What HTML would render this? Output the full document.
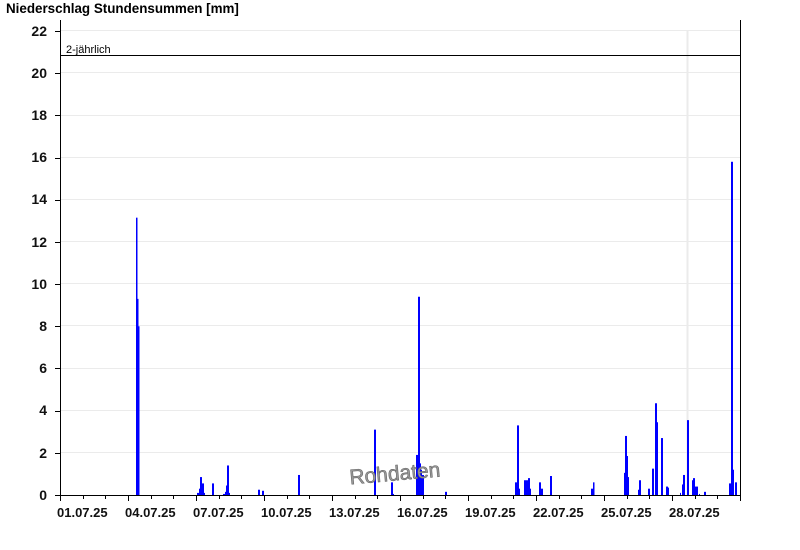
<!DOCTYPE html>
<html><head><meta charset="utf-8"><style>
html,body{margin:0;padding:0;background:#fff;width:800px;height:550px;overflow:hidden}
svg{display:block}
text{font-family:"Liberation Sans",Arial,sans-serif}
</style></head><body>
<svg width="800" height="550" viewBox="0 0 800 550" xmlns="http://www.w3.org/2000/svg">
<text x="6" y="13" font-size="13.4" font-weight="bold" fill="#000">Niederschlag Stundensummen [mm]</text>
<g stroke="#ebebeb" stroke-width="1">
<line x1="61" x2="740" y1="452.5" y2="452.5"/><line x1="61" x2="740" y1="410.5" y2="410.5"/>
<line x1="61" x2="740" y1="368.5" y2="368.5"/><line x1="61" x2="740" y1="325.5" y2="325.5"/>
<line x1="61" x2="740" y1="283.5" y2="283.5"/><line x1="61" x2="740" y1="241.5" y2="241.5"/>
<line x1="61" x2="740" y1="199.5" y2="199.5"/><line x1="61" x2="740" y1="157.5" y2="157.5"/>
<line x1="61" x2="740" y1="115.5" y2="115.5"/><line x1="61" x2="740" y1="72.5" y2="72.5"/>
<line x1="61" x2="740" y1="30.5" y2="30.5"/>
<line x1="687.5" x2="687.5" y1="30" y2="495" stroke-width="2"/>
</g>
<line x1="61" x2="740" y1="55.5" y2="55.5" stroke="#000"/>
<text x="66" y="53" font-size="11" fill="#000">2-jährlich</text>
<g fill="#0000ff" transform="translate(0,495) scale(1,-21.09)">
<rect x="136" y="0" width="1.5" height="13.15"/><rect x="137" y="0" width="1.5" height="9.3"/><rect x="138" y="0" width="1.5" height="8.0"/>
<rect x="197" y="0" width="2" height="0.1"/><rect x="199" y="0" width="1" height="0.3"/><rect x="200" y="0" width="2" height="0.85"/>
<rect x="202" y="0" width="2" height="0.55"/><rect x="204" y="0" width="1" height="0.1"/><rect x="212" y="0" width="2" height="0.55"/>
<rect x="223" y="0" width="2" height="0.05"/><rect x="225" y="0" width="1" height="0.15"/><rect x="226" y="0" width="1" height="0.45"/>
<rect x="227" y="0" width="2" height="1.4"/><rect x="229" y="0" width="1" height="0.1"/>
<rect x="258" y="0" width="2" height="0.25"/><rect x="262" y="0" width="2" height="0.2"/><rect x="298" y="0" width="2" height="0.95"/>
<rect x="374" y="0" width="2" height="3.1"/><rect x="391" y="0" width="2" height="0.6"/><rect x="393" y="0" width="1" height="0.05"/>
<rect x="416" y="0" width="2" height="1.9"/><rect x="418" y="0" width="2" height="9.4"/><rect x="419" y="0" width="2" height="1.5"/>
<rect x="420" y="0" width="2" height="1.2"/><rect x="422" y="0" width="2" height="0.95"/><rect x="445" y="0" width="2" height="0.15"/>
<rect x="515" y="0" width="2" height="0.6"/><rect x="517" y="0" width="2" height="3.3"/><rect x="519" y="0" width="1" height="0.3"/>
<rect x="524" y="0" width="2" height="0.7"/><rect x="526" y="0" width="2" height="0.7"/><rect x="528" y="0" width="2" height="0.8"/>
<rect x="530" y="0" width="1" height="0.3"/><rect x="539" y="0" width="2" height="0.6"/><rect x="541" y="0" width="2" height="0.3"/>
<rect x="550" y="0" width="2" height="0.9"/><rect x="591" y="0" width="2" height="0.3"/><rect x="593" y="0" width="1.5" height="0.6"/>
<rect x="624" y="0" width="1" height="1.05"/><rect x="625" y="0" width="2" height="2.8"/><rect x="627" y="0" width="1" height="1.85"/>
<rect x="628" y="0" width="1" height="0.85"/><rect x="638" y="0" width="1" height="0.25"/><rect x="639" y="0" width="2" height="0.7"/>
<rect x="648" y="0" width="2" height="0.3"/><rect x="652" y="0" width="2" height="1.25"/><rect x="655" y="0" width="2" height="4.35"/>
<rect x="657" y="0" width="1" height="3.45"/><rect x="661" y="0" width="2" height="2.7"/><rect x="666" y="0" width="2" height="0.4"/>
<rect x="668" y="0" width="1" height="0.35"/><rect x="680" y="0" width="1" height="0.1"/><rect x="682" y="0" width="1" height="0.5"/>
<rect x="683" y="0" width="2" height="0.95"/><rect x="687" y="0" width="2" height="3.55"/><rect x="692" y="0" width="1" height="0.7"/>
<rect x="693" y="0" width="2" height="0.8"/><rect x="695" y="0" width="2" height="0.4"/><rect x="697" y="0" width="1" height="0.4"/>
<rect x="699" y="0" width="1" height="0.05"/><rect x="704" y="0" width="2" height="0.15"/>
<rect x="729" y="0" width="2" height="0.55"/><rect x="731" y="0" width="2" height="15.8"/><rect x="733" y="0" width="1" height="1.2"/>
<rect x="735" y="0" width="2" height="0.6"/>
</g>
<line x1="60.5" x2="60.5" y1="20" y2="500" stroke="#000"/>
<line x1="740.5" x2="740.5" y1="20" y2="500" stroke="#000"/>
<line x1="55" x2="741" y1="495.5" y2="495.5" stroke="#000"/>
<path stroke="#000" fill="none" d="M60.5 495v6M83.5 495v4M105.5 495v4M128.5 495v6M151.5 495v4M173.5 495v4M196.5 495v6M219.5 495v4M241.5 495v4M264.5 495v6M287.5 495v4M309.5 495v4M332.5 495v6M355.5 495v4M377.5 495v4M400.5 495v6M423.5 495v4M445.5 495v4M468.5 495v6M491.5 495v4M513.5 495v4M536.5 495v6M559.5 495v4M581.5 495v4M604.5 495v6M627.5 495v4M649.5 495v4M672.5 495v6M695.5 495v4M717.5 495v4M740.5 495v6
M55 495.5h5M55 453.5h5M55 411.5h5M55 368.5h5M55 326.5h5M55 284.5h5M55 242.5h5M55 200.5h5M55 158.5h5M55 115.5h5M55 73.5h5M55 31.5h5"/>
<g font-size="14" font-weight="bold" text-anchor="end" fill="#111">
<text x="47" y="500">0</text><text x="47" y="458">2</text><text x="47" y="415">4</text>
<text x="47" y="373">6</text><text x="47" y="331">8</text><text x="47" y="289">10</text>
<text x="47" y="247">12</text><text x="47" y="204">14</text><text x="47" y="162">16</text>
<text x="47" y="120">18</text><text x="47" y="78">20</text><text x="47" y="36">22</text>
</g>
<g font-size="13" font-weight="bold" fill="#111">
<text x="57" y="517">01.07.25</text><text x="125" y="517">04.07.25</text><text x="193" y="517">07.07.25</text>
<text x="261" y="517">10.07.25</text><text x="329" y="517">13.07.25</text><text x="397" y="517">16.07.25</text>
<text x="465" y="517">19.07.25</text><text x="533" y="517">22.07.25</text><text x="601" y="517">25.07.25</text>
<text x="669" y="517">28.07.25</text>
</g>
<text x="349" y="480" font-size="21" fill="#999" stroke="#666" stroke-width="0.6" transform="rotate(-5 400 470)">Rohdaten</text>
</svg>
</body></html>
